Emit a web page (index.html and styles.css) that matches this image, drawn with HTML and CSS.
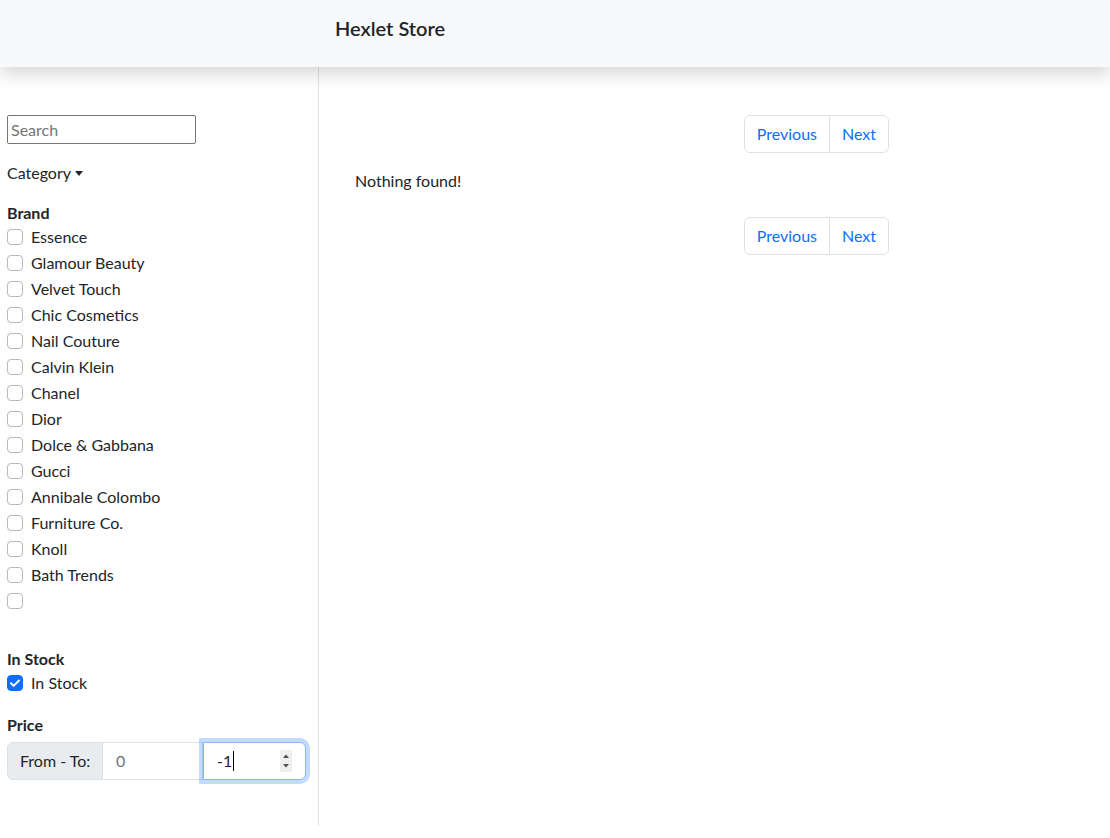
FILE: index.html
```html
<!DOCTYPE html>
<html lang="en">
<head>
<meta charset="utf-8">
<title>Hexlet Store</title>
<link rel="stylesheet" href="styles.css">
</head>
<body>
<header class="navbar">
  <div class="brand">Hexlet Store</div>
</header>
<div class="layout">
  <aside class="sidebar">
    <div class="search-wrap"><input class="search" type="text" placeholder="Search"></div>
    <div class="dropdown">Category<span class="caret"></span></div>
    <div class="group">
      <div class="group-title">Brand</div>
      <div class="check"><span class="box"></span><span class="label">Essence</span></div>
      <div class="check"><span class="box"></span><span class="label">Glamour Beauty</span></div>
      <div class="check"><span class="box"></span><span class="label">Velvet Touch</span></div>
      <div class="check"><span class="box"></span><span class="label">Chic Cosmetics</span></div>
      <div class="check"><span class="box"></span><span class="label">Nail Couture</span></div>
      <div class="check"><span class="box"></span><span class="label">Calvin Klein</span></div>
      <div class="check"><span class="box"></span><span class="label">Chanel</span></div>
      <div class="check"><span class="box"></span><span class="label">Dior</span></div>
      <div class="check"><span class="box"></span><span class="label">Dolce &amp; Gabbana</span></div>
      <div class="check"><span class="box"></span><span class="label">Gucci</span></div>
      <div class="check"><span class="box"></span><span class="label">Annibale Colombo</span></div>
      <div class="check"><span class="box"></span><span class="label">Furniture Co.</span></div>
      <div class="check"><span class="box"></span><span class="label">Knoll</span></div>
      <div class="check"><span class="box"></span><span class="label">Bath Trends</span></div>
      <div class="check"><span class="box"></span><span class="label"></span></div>
    </div>
    <div class="group stock">
      <div class="group-title">In Stock</div>
      <div class="check"><span class="box checked"><svg viewBox="0 0 16 16" width="16" height="16"><path d="M4 8.3l2.6 2.6L12 5.5" fill="none" stroke="#fff" stroke-width="2" stroke-linecap="round" stroke-linejoin="round"/></svg></span><span class="label">In Stock</span></div>
    </div>
    <div class="group price">
      <div class="group-title">Price</div>
      <div class="input-group">
        <span class="ig-text">From - To:</span>
        <span class="ig-input muted">0</span>
        <span class="ig-input focused"><span class="val">-1</span><span class="cursor"></span><span class="spin"><svg viewBox="0 0 12 22" width="12" height="22"><rect width="12" height="22" fill="#efefef"/><path d="M3 8l3-3.5L9 8z" fill="#505050"/><path d="M3 14l3 3.5L9 14z" fill="#505050"/></svg></span></span>
      </div>
    </div>
  </aside>
  <main class="main">
    <nav class="pager">
      <a class="page first">Previous</a><a class="page last">Next</a>
    </nav>
    <p class="empty">Nothing found!</p>
    <nav class="pager">
      <a class="page first">Previous</a><a class="page last">Next</a>
    </nav>
  </main>
</div>
</body>
</html>
```

FILE: styles.css
```css
* { box-sizing: border-box; }
html, body { margin: 0; padding: 0; }
body {
  font-family: "Segoe UI", Lato, "Noto Sans", sans-serif;
  font-size: 16px;
  line-height: 24px;
  color: #212529;
  background: #fff;
  height: 838px;
  overflow: hidden;
}
.navbar {
  height: 67px;
  background: #f8f9fa;
  box-shadow: 0 8px 16px rgba(0,0,0,.15);
  position: relative;
  z-index: 2;
  padding: 13px 0 0 335px;
}
.brand {
  font-size: 20px;
  line-height: 30px;
  font-weight: 600;
}
.layout {
  display: flex;
  align-items: flex-start;
}
.sidebar {
  width: 319px;
  height: 759px;
  border-right: 1px solid #dee2e6;
  padding: 48px 0 0 7px;
}
.search-wrap { margin-bottom: 17px; height: 29px; }
.search {
  width: 189px;
  height: 29px;
  border: 1px solid #767676;
  border-radius: 2px;
  padding: 1px 3px;
  font: inherit;
  font-size: 16px;
  color: #212529;
  outline: none;
  background: #fff;
}
.search::placeholder { color: #757575; }
.dropdown { margin-bottom: 16px; display: flex; align-items: center; }
.caret {
  display: inline-block;
  margin-left: 4px;
  width: 0; height: 0;
  border-left: 4px solid transparent;
  border-right: 4px solid transparent;
  border-top: 5px solid #212529;
  margin-top: 1px;
}
.group-title { font-weight: 700; }
.check {
  display: flex;
  align-items: center;
  min-height: 24px;
  margin-bottom: 2px;
}
.box {
  width: 16px; height: 16px;
  border: 1px solid #b5b9bd;
  border-radius: 4px;
  background: #fff;
  margin-right: 8px;
  flex: none;
  display: block;
}
.box.checked { background: #0d6efd; border-color: #0d6efd; }
.box.checked svg { display: block; margin: -1px; }
.stock { margin-top: 34px; }
.price { margin-top: 18px; }
.input-group {
  margin-top: 5px;
  display: flex;
  width: 299px;
  height: 38px;
}
.ig-text {
  width: 96px;
  background: #e9ecef;
  border: 1px solid #dee2e6;
  border-radius: 6px 0 0 6px;
  padding: 6px 12px;
  white-space: nowrap;
}
.ig-input {
  width: 100px;
  border: 1px solid #dee2e6;
  border-left: 0;
  padding: 6px 13px;
  background: #fff;
}
.muted { color: #6c757d; }
.ig-input.focused {
  width: 103px;
  border: 1px solid #86b7fe;
  border-radius: 0 6px 6px 0;
  box-shadow: 0 0 0 4px rgba(13,110,253,.25);
  display: flex;
  align-items: center;
  padding: 0 13px;
  position: relative;
  z-index: 1;
}
.cursor {
  width: 1px; height: 20px;
  background: #000;
  margin-left: 1px;
}
.spin { margin-left: auto; display: flex; }
.main {
  padding: 48px 0 0 36px;
  width: 570px;
}
.pager { display: flex; justify-content: flex-end; }
.page {
  display: block;
  padding: 6px 12px;
  border: 1px solid #dee2e6;
  color: #0d6efd;
  line-height: 24px;
  background: #fff;
}
.page.first { border-radius: 6px 0 0 6px; }
.page.last { border-radius: 0 6px 6px 0; margin-left: -1px; }
.empty { margin: 16px 0 24px; }
```
